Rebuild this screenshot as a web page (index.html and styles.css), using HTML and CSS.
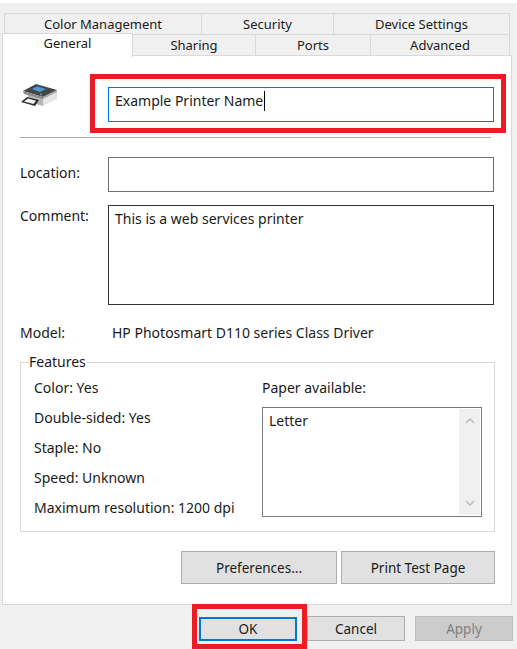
FILE: index.html
```html
<!DOCTYPE html>
<html lang="en">
<head>
<meta charset="utf-8">
<title>Printer Properties</title>
<link rel="stylesheet" href="styles.css">
</head>
<body>
<div class="dialog">
  <div class="tabs">
    <div class="tab-row back">
      <div class="tab t-color">Color Management</div>
      <div class="tab t-security">Security</div>
      <div class="tab t-device">Device Settings</div>
    </div>
    <div class="tab-row front">
      <div class="tab active">General</div>
      <div class="tab t-sharing">Sharing</div>
      <div class="tab t-ports">Ports</div>
      <div class="tab t-advanced">Advanced</div>
    </div>
  </div>
  <main class="panel">
    <div class="name-row">
      <svg class="printer" viewBox="0 0 36 24" width="36" height="24" aria-hidden="true">
        <path d="M7 11 L22 15 L22 23 L7 19 Z" fill="#b4b6b8"/>
        <path d="M22 15 L36 9 L36 16 L22 23 Z" fill="#e6e6e6"/>
        <path d="M2 8 L15 1 L36 7 L22 14 Z" fill="#44474a"/>
        <path d="M2 8 L22 14 L22 16 L3 11 Z" fill="#8a8c8f"/>
        <path d="M22 14 L36 7 L36 9 L22 16 Z" fill="#a5a7a9"/>
        <path d="M11 6 L16 3.5 L25 6 L19 9 Z" fill="#4f9bd9"/>
        <circle cx="20" cy="11.5" r="0.9" fill="#58c26b"/>
        <path d="M0 19 L6 14 L18 17 L14 23 Z" fill="#2b2b2b"/>
        <path d="M3 18.5 L7 15.5 L15 17.8 L12.5 21 Z" fill="#f6f6f6"/>
      </svg>
      <div class="field name-field">Example Printer Name<span class="caret"></span></div>
    </div>
    <div class="divider"></div>
    <div class="form-row location-row">
      <span class="label">Location:</span>
      <div class="field plain"></div>
    </div>
    <div class="form-row comment-row">
      <span class="label">Comment:</span>
      <div class="field plain comment">This is a web services printer</div>
    </div>
    <div class="form-row model-row">
      <span class="label">Model:</span>
      <span class="model">HP Photosmart D110 series Class Driver</span>
    </div>
    <fieldset class="features">
      <legend>Features</legend>
      <ul class="spec-list">
        <li>Color: Yes</li>
        <li>Double-sided: Yes</li>
        <li>Staple: No</li>
        <li>Speed: Unknown</li>
        <li>Maximum resolution: 1200 dpi</li>
      </ul>
      <div class="paper">
        <div class="paper-label">Paper available:</div>
        <div class="listbox">
          <div class="list-item">Letter</div>
          <div class="scrollbar">
            <svg viewBox="0 0 10 6" width="10" height="6" aria-hidden="true"><path d="M1 5 L5 1 L9 5" fill="none" stroke="#bdbdbd" stroke-width="1.5"/></svg>
            <svg viewBox="0 0 10 6" width="10" height="6" aria-hidden="true"><path d="M1 1 L5 5 L9 1" fill="none" stroke="#bdbdbd" stroke-width="1.5"/></svg>
          </div>
        </div>
      </div>
    </fieldset>
    <div class="panel-actions">
      <button class="btn prefs">Preferences...</button>
      <button class="btn test">Print Test Page</button>
    </div>
  </main>
  <footer class="footer">
    <button class="btn small ok">OK</button>
    <button class="btn small cancel">Cancel</button>
    <button class="btn small apply">Apply</button>
  </footer>
</div>
<div class="mark mark-name"></div>
<div class="mark mark-ok"></div>
</body>
</html>
```

FILE: styles.css
```css
* { box-sizing: border-box; }
html, body { margin: 0; padding: 0; }
body {
  position: relative;
  width: 517px;
  height: 649px;
  overflow: hidden;
  background: #f0f0f0;
  font-family: "Noto Sans", "Open Sans", sans-serif;
  font-size: 14px;
  color: #1a1a1a;
}
.dialog { border-top: 3px solid #fff; height: 649px; padding-top: 10px; }

.tabs { height: 42px; }
.tab-row { display: flex; }
.tab {
  display: flex;
  align-items: center;
  justify-content: center;
  background: #f0f0f0;
  border: 1px solid #d9d9d9;
  border-left: 0;
  height: 22px;
  padding-bottom: 1px;
  font-size: 13px;
}
.back { margin-left: 4px; width: 506px; border-left: 1px solid #d9d9d9; }
.t-color { width: 197px; }
.t-security { width: 132px; }
.t-device { width: 176px; }
.front { margin-left: 2px; margin-top: -1px; width: 508px; align-items: flex-end; }
.front .tab { padding-bottom: 1px; }
.front .active {
  position: relative;
  z-index: 2;
  width: 131px;
  height: 24px;
  margin-top: -2px;
  margin-bottom: -1px;
  background: #fff;
  border: 1px solid #d9d9d9;
  border-bottom: 0;
  padding-bottom: 6px;
}
.t-sharing { width: 123px; }
.t-ports { width: 115px; }
.t-advanced { width: 139px; }

.panel {
  margin-left: 2px;
  width: 510px;
  height: 550px;
  background: #fff;
  border: 1px solid #d9d9d9;
  padding: 31px 0 0 17px;
}
.name-row { display: flex; align-items: flex-start; height: 35px; }
.printer { margin: -4px 0 0 1px; flex: none; }
.field {
  border: 1px solid #6e6e6e;
  background: #fff;
  width: 386px;
  height: 35px;
  padding: 0 6px;
  display: flex;
  align-items: center;
}
.name-field { border-color: #0078d7; margin-left: 51px; padding-bottom: 8px; }
.caret { width: 1px; height: 20px; background: #000; margin-left: 1px; }
.divider { height: 1px; background: #a8a8a8; width: 471px; margin-top: 15px; }
.form-row { display: flex; }
.label { width: 88px; flex: none; }
.location-row { margin-top: 19px; height: 35px; }
.location-row .label { line-height: 32px; }
.comment-row { margin-top: 13px; height: 100px; }
.comment-row .label { line-height: 22px; }
.comment { height: 100px; align-items: flex-start; padding-top: 3px; border-color: #333; }
.model-row { margin-top: 17px; height: 22px; line-height: 22px; }
.model { padding-left: 4px; }

.features {
  display: flex;
  margin: 9px 0 0 0;
  padding: 0;
  width: 475px;
  height: 179px;
  border: 1px solid #d9d9d9;
}
.features legend {
  margin-left: 8px;
  padding: 0;
  line-height: 18px;
  background: #fff;
}
.spec-list {
  list-style: none;
  margin: 0;
  padding: 2px 0 0 13px;
  width: 241px;
  flex: none;
}
.spec-list li { height: 30px; line-height: 30px; }
.paper { padding-top: 2px; }
.paper-label { height: 30px; line-height: 30px; }
.listbox {
  display: flex;
  justify-content: space-between;
  width: 220px;
  height: 110px;
  margin-top: 4px;
  border: 1px solid #7a7a7a;
}
.list-item { padding: 3px 0 0 6px; }
.scrollbar {
  width: 21px;
  margin: 1px;
  background: #f0f0f0;
  display: flex;
  flex-direction: column;
  justify-content: space-between;
  align-items: center;
  padding: 9px 0;
}
.scrollbar svg { display: block; }

.panel-actions { display: flex; gap: 4px; margin: 19px 0 0 161px; }
.btn {
  font: inherit;
  font-size: 13.5px;
  color: inherit;
  background: #e1e1e1;
  border: 1px solid #adadad;
  border-radius: 0;
  padding: 0;
  height: 33px;
}
.prefs { width: 156px; }
.test { width: 154px; }

.footer { display: flex; margin: 11px 0 0 0; padding-left: 199px; align-items: center; height: 25px; }
.small { width: 98px; height: 25px; }
.ok { border: 2px solid #0078d7; height: 24px; }
.cancel { margin-left: 10px; }
.apply { margin-left: 10px; background: #cccccc; border-color: #bfbfbf; color: #7f7f7f; }

.mark { position: absolute; border: 5px solid #ed1c24; pointer-events: none; }
.mark-name { left: 90px; top: 74px; width: 416px; height: 59px; }
.mark-ok { left: 192px; top: 604px; width: 115px; height: 45px; }
```
